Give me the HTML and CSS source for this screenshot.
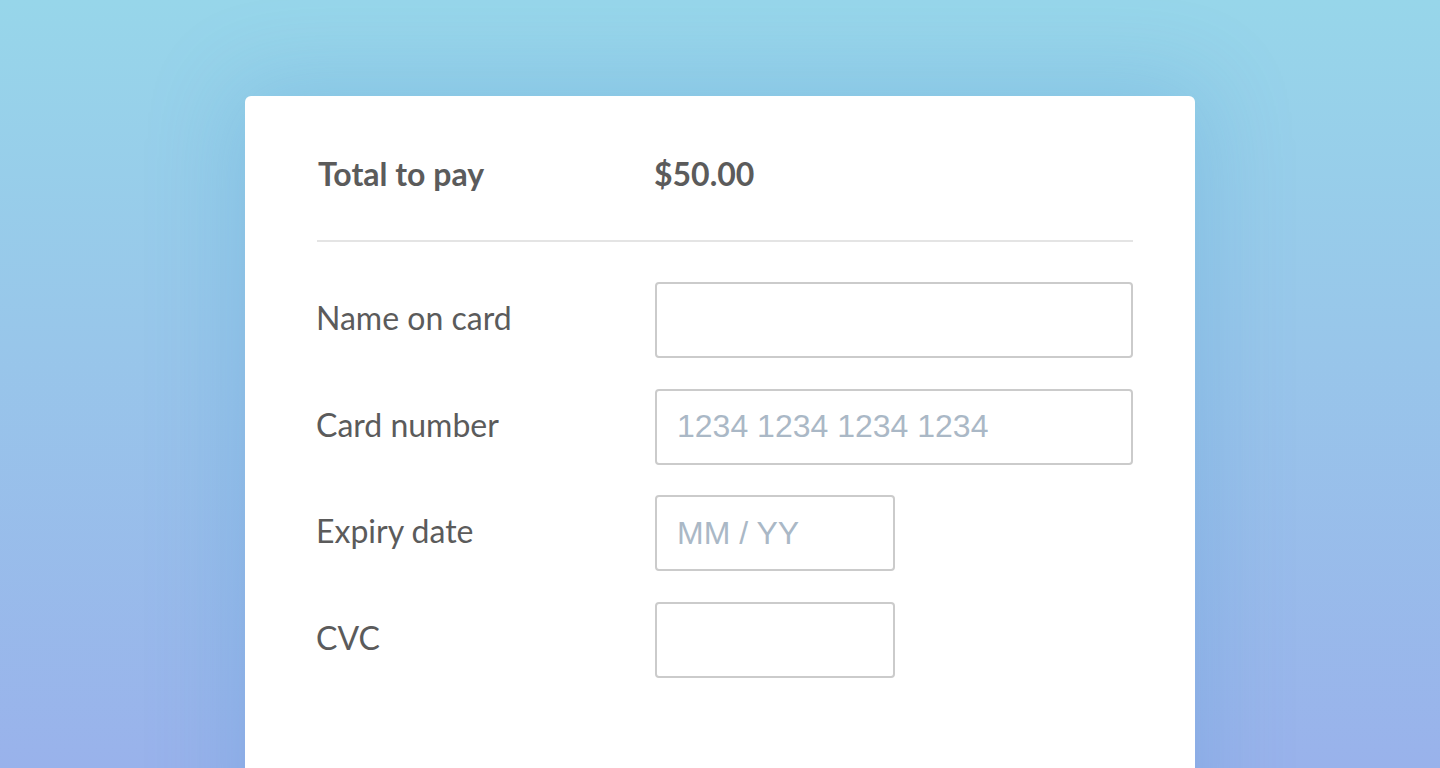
FILE: index.html
```html
<!DOCTYPE html>
<html lang="en">
<head>
<meta charset="utf-8">
<title>Payment</title>
<link rel="stylesheet" href="styles.css">
</head>
<body>
<main class="stage">
  <section class="card">
    <div class="total">
      <span class="total-label">Total to pay</span>
      <span class="total-amount">$50.00</span>
    </div>
    <hr class="divider">
    <form class="form">
      <label class="label" for="name">Name on card</label>
      <input class="field field-wide" id="name" type="text">
      <label class="label" for="number">Card number</label>
      <input class="field field-wide" id="number" type="text" placeholder="1234 1234 1234 1234">
      <label class="label" for="expiry">Expiry date</label>
      <input class="field field-short" id="expiry" type="text" placeholder="MM / YY">
      <label class="label" for="cvc">CVC</label>
      <input class="field field-short" id="cvc" type="text">
    </form>
  </section>
</main>
</body>
</html>
```
FILE: styles.css
```css
html, body {
  margin: 0;
  padding: 0;
  height: 100%;
  overflow: hidden;
}
body {
  background: linear-gradient(180deg, #97d6ea 0%, #98c6ea 45%, #99b2eb 100%);
  font-family: "Lato", "Open Sans", sans-serif;
  color: #5b5b5b;
}
.stage {
  display: flex;
  justify-content: center;
  padding-top: 96px;
}
.card {
  width: 950px;
  min-height: 760px;
  box-sizing: border-box;
  background: #ffffff;
  border-radius: 6px;
  padding: 61px 62px 0 72px;
  box-shadow: 0 0 90px 10px rgba(60, 140, 200, 0.22);
}
.total {
  display: grid;
  grid-template-columns: 336px 1fr;
  font-size: 32px;
  font-weight: 700;
  line-height: 34px;
  height: 34px;
  padding-left: 1px;
}
.divider {
  border: 0;
  height: 2px;
  background: #e4e4e4;
  margin: 49px 0 40px 0;
}
.form {
  display: grid;
  grid-template-columns: 338px 478px;
  grid-auto-rows: 76px;
  row-gap: 30.5px;
  align-items: center;
}
.label {
  font-size: 32px;
  line-height: 36px;
  margin-top: -4px;
  margin-left: -1px;
}
.field {
  height: 76px;
  box-sizing: border-box;
  border: 2px solid #cbcbcb;
  border-radius: 4px;
  padding: 0 20px;
  font-family: "Liberation Sans", Arial, sans-serif;
  font-size: 32px;
  color: #333;
  background: #fff;
  outline: none;
}
.field::placeholder {
  color: #aab8c6;
}
.field-wide {
  width: 478px;
}
.field-short {
  width: 240px;
}
```
